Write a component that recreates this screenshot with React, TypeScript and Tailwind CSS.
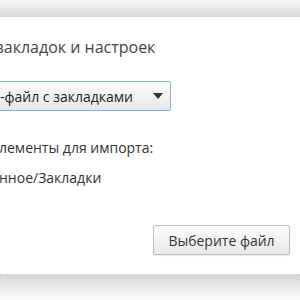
export default function App() {
  return (
    <div className="w-[300px] h-[300px] overflow-hidden flex flex-col bg-white font-['Open_Sans','Noto_Sans',sans-serif]">
      {/* тень сверху */}
      <div className="h-[17px] shrink-0 bg-gradient-to-b from-[#f6f6f6] to-[#dadada]" />

      {/* окно диалога */}
      <div className="flex-1 flex flex-col pt-[19px] pr-[10px] overflow-hidden">
        <div className="-ml-[4px] text-[16px] leading-[22px] text-[#444] whitespace-nowrap">
          закладок и настроек
        </div>

        {/* выпадающий список */}
        <div className="mt-[23px] -ml-[6px] w-[177px] h-[30px] flex items-center justify-between pl-[5px] pr-[7px] border border-[#7fb2ea] rounded-[2px] bg-gradient-to-b from-[#fbfbfb] to-[#e8e8e8]">
          <span className="text-[14px] text-[#222] whitespace-nowrap">-файл с закладками</span>
          <svg width="10" height="6" viewBox="0 0 10 6">
            <path d="M0 0 H10 L5 6 Z" fill="#333" />
          </svg>
        </div>

        <div className="mt-[27px] -ml-[1px] text-[14px] leading-[20px] text-[#333] whitespace-nowrap">
          лементы для импорта:
        </div>
        <div className="mt-[10px] -ml-[1px] text-[14px] leading-[20px] text-[#333] whitespace-nowrap">
          нное/Закладки
        </div>

        <div className="mt-auto mb-[19px] flex justify-end">
          <button className="w-[137px] h-[30px] border border-[#bcbcbc] rounded-[2px] bg-gradient-to-b from-[#fcfcfc] to-[#e9e9e9] text-[14px] text-[#333] shadow-[0_1px_1px_rgba(0,0,0,0.08)]">
            Выберите файл
          </button>
        </div>
      </div>

      {/* тень снизу */}
      <div className="h-[26px] shrink-0 border-t border-dotted border-[#c4c4c4] bg-gradient-to-b from-[#d6d6d6] to-[#fbfbfb]" />
    </div>
  )
}
